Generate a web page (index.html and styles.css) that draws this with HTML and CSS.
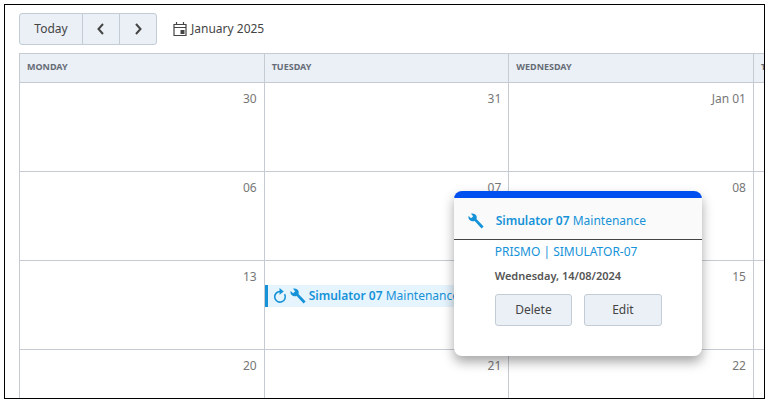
FILE: index.html
```
<!DOCTYPE html>
<html lang="en">
<head>
    <meta charset="utf-8">
    <title>Calendar</title>
    <link rel="stylesheet" href="styles.css">
</head>
<body>
    <svg class="symbols" aria-hidden="true">
        <symbol id="wrench" viewBox="0 0 16 16">
            <path d="M3 .7C5.300 0 7.700 1 8.500 3.100C8.900 4.200 8.900 5.200 8.500 6.100L15.600 13.400L13.600 15.500L6.700 8C5 8.700 3 8.300 1.700 7C.6 5.900.2 4.400.6 2.900L3.100 5.300L5.200 3.200Z"/>
        </symbol>
    </svg>
    <main class="frame">
        <div class="toolbar">
            <div class="nav">
                <button type="button" class="btn today">Today</button>
                <button type="button" class="btn arrow" aria-label="Previous month">
                    <svg width="10" height="12" viewBox="0 0 10 12"><path d="M7 1L2.500 6L7 11"/></svg>
                </button>
                <button type="button" class="btn arrow" aria-label="Next month">
                    <svg width="10" height="12" viewBox="0 0 10 12"><path d="M3 1L7.500 6L3 11"/></svg>
                </button>
            </div>
            <div class="month">
                <svg width="14" height="15" viewBox="0 0 14 15">
                    <path d="M1 2.500H13V13.500H1ZM1 5.500H13M3.500 0V3M10.500 0V3" fill="none" stroke="#444" stroke-width="1.200"/>
                    <rect x="7.500" y="8" width="4" height="4" fill="#444"/>
                </svg>
                <span>January 2025</span>
            </div>
        </div>

        <table class="calendar">
            <thead>
                <tr><th>Monday</th><th>Tuesday</th><th>Wednesday</th><th>Thursday</th></tr>
            </thead>
            <tbody>
                <tr><td>30</td><td>31</td><td>Jan 01</td><td></td></tr>
                <tr><td>06</td><td>07</td><td>08</td><td></td></tr>
                <tr>
                    <td>13</td>
                    <td class="has-event">
                        <div class="event">
                            <svg class="repeat" width="14" height="16" viewBox="0 0 14 16"><path d="M8 3.500H7A5.300 5.300 0 1 0 11.600 6.200" fill="none" stroke="#1592d8" stroke-width="1.600"/><path d="M6.500 0L10.800 3.400L6.500 6.800Z"/></svg>
                            <svg class="wrench" width="16" height="16"><use href="#wrench"/></svg>
                            <span><b>Simulator 07</b> Maintenance</span>
                            <div class="popup">
                                <div class="popup-title">
                                    <svg class="wrench" width="16" height="16"><use href="#wrench"/></svg>
                                    <span><b>Simulator 07</b> Maintenance</span>
                                </div>
                                <div class="popup-body">
                                    <div class="resource">PRISMO | SIMULATOR-07</div>
                                    <div class="date">Wednesday, 14/08/2024</div>
                                    <div class="actions">
                                        <button type="button" class="btn">Delete</button>
                                        <button type="button" class="btn">Edit</button>
                                    </div>
                                </div>
                            </div>
                        </div>
                    </td>
                    <td>15</td><td></td>
                </tr>
                <tr><td>20</td><td>21</td><td>22</td><td></td></tr>
            </tbody>
        </table>
    </main>
</body>
</html>
```
FILE: styles.css
```
* { box-sizing: border-box; }
body { margin: 0; padding: 4px 4px 3px; height: 100vh; background: #fff; color: #666; font: 12px/18px "Noto Sans", "Open Sans", sans-serif; }
button { font: inherit; }
svg { flex: none; }
.symbols { position: absolute; width: 0; height: 0; }
.frame { height: 100%; overflow: hidden; border: 1px solid #000; padding: 8px 0 0 14px; }

.toolbar { display: flex; align-items: center; gap: 16px; margin-bottom: 8px; }
.nav { display: flex; }
.btn { height: 32px; padding: 0; border: 1px solid #c3ccd4; border-radius: 3px; background: #ebf0f7; color: #444; }
.nav .btn + .btn { margin-left: -1px; }
.nav .btn:not(:last-child) { border-top-right-radius: 0; border-bottom-right-radius: 0; }
.nav .btn:not(:first-child) { border-top-left-radius: 0; border-bottom-left-radius: 0; }
.today { width: 64px; }
.arrow { display: flex; align-items: center; justify-content: center; width: 38px; }
.arrow path { fill: none; stroke: #444; stroke-width: 2; }
.month { display: flex; align-items: center; gap: 4px; color: #444; }

/* the last weekday runs off the right edge */
.calendar { width: 131.5%; table-layout: fixed; border-collapse: collapse; }
.calendar th, .calendar td { border: 1px solid #c5cad3; }
.calendar th { height: 29px; padding: 0 7px 2px; background: #ebf0f7; color: #666c76; font-size: 9px; text-align: left; text-transform: uppercase; }
.calendar td { height: 89px; padding: 7px 7px 0; text-align: right; vertical-align: top; color: #777; }
.calendar .has-event { padding: 24px 0 0; }

.event { position: relative; display: flex; align-items: center; gap: 3px; height: 22px; padding-left: 5px; border-left: 3px solid #1592d8; background: #e6f4fd; color: #1592d8; text-align: left; white-space: nowrap; }
.event svg { fill: #1592d8; }
.event b { font-weight: 600; }

.popup { position: absolute; left: 186px; top: -94px; z-index: 1; width: 248px; height: 165px; border-top: 7px solid #0050f0; border-radius: 8px; background: #fff; box-shadow: 0 6px 12px rgba(0, 0, 0, 0.35); }
.popup-title { display: flex; align-items: center; gap: 12px; height: 42px; padding: 4px 14px 0; border-bottom: 1px solid #444; background: #fafafa; }
.popup-body { padding: 3px 40px 0 41px; }
.date { margin-top: 6px; color: #555; font-size: 11px; font-weight: 600; }
.actions { display: flex; gap: 12px; margin-top: 9px; }
.actions .btn { width: 78px; }
```
